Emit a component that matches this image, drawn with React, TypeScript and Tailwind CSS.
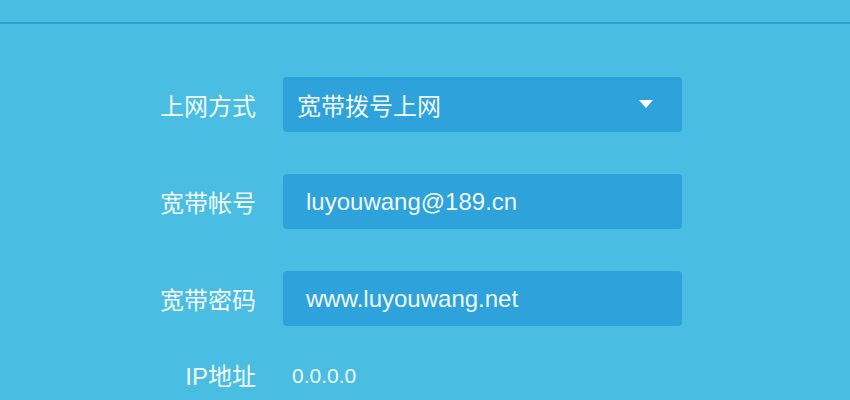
const cjk = "font-['Noto_Sans_CJK_SC','Noto_Sans',sans-serif]";
const latin = "font-['Liberation_Sans','Noto_Sans_CJK_SC',sans-serif]";

function Field({ label, value, select, indent }: { label: string; value: string; select?: boolean; indent?: boolean }) {
  return (
    <div className="flex items-center h-[55px]">
      <div className={`w-[256px] text-right text-[24px] text-white/95 ${cjk}`}>{label}</div>
      <div className="ml-[27px] w-[399px] h-[55px] rounded-[4px] bg-[#2ea2da] flex items-center justify-between">
        <span className={`${indent ? `pl-[23px] ${latin}` : `pl-[14px] ${cjk}`} text-[24px] text-white/95`}>{value}</span>
        {select && (
          <svg width="14" height="9" viewBox="0 0 14 9" className="mr-[29px]">
            <path d="M0 0H14L7 8Z" fill="#ffffff" />
          </svg>
        )}
      </div>
    </div>
  );
}

export default function App() {
  return (
    <div className="w-[850px] h-[400px] overflow-hidden bg-[#4abde2]">
      <div className="h-[22px]" />
      <div className="h-[2px] bg-[#2a9fd5]" />
      <div className="pt-[53px] flex flex-col gap-[42px]">
        <Field label="上网方式" value="宽带拨号上网" select />
        <Field label="宽带帐号" value="luyouwang@189.cn" indent />
        <Field label="宽带密码" value="www.luyouwang.net" indent />
      </div>
      <div className="flex items-center mt-[34px]">
        <div className={`w-[256px] text-right text-[24px] leading-[30px] text-white/95 ${cjk}`}>
          <span className={latin}>IP</span>地址
        </div>
        <div className={`ml-[36px] text-[21px] leading-[30px] text-white/95 ${latin}`}>0.0.0.0</div>
      </div>
    </div>
  );
}
